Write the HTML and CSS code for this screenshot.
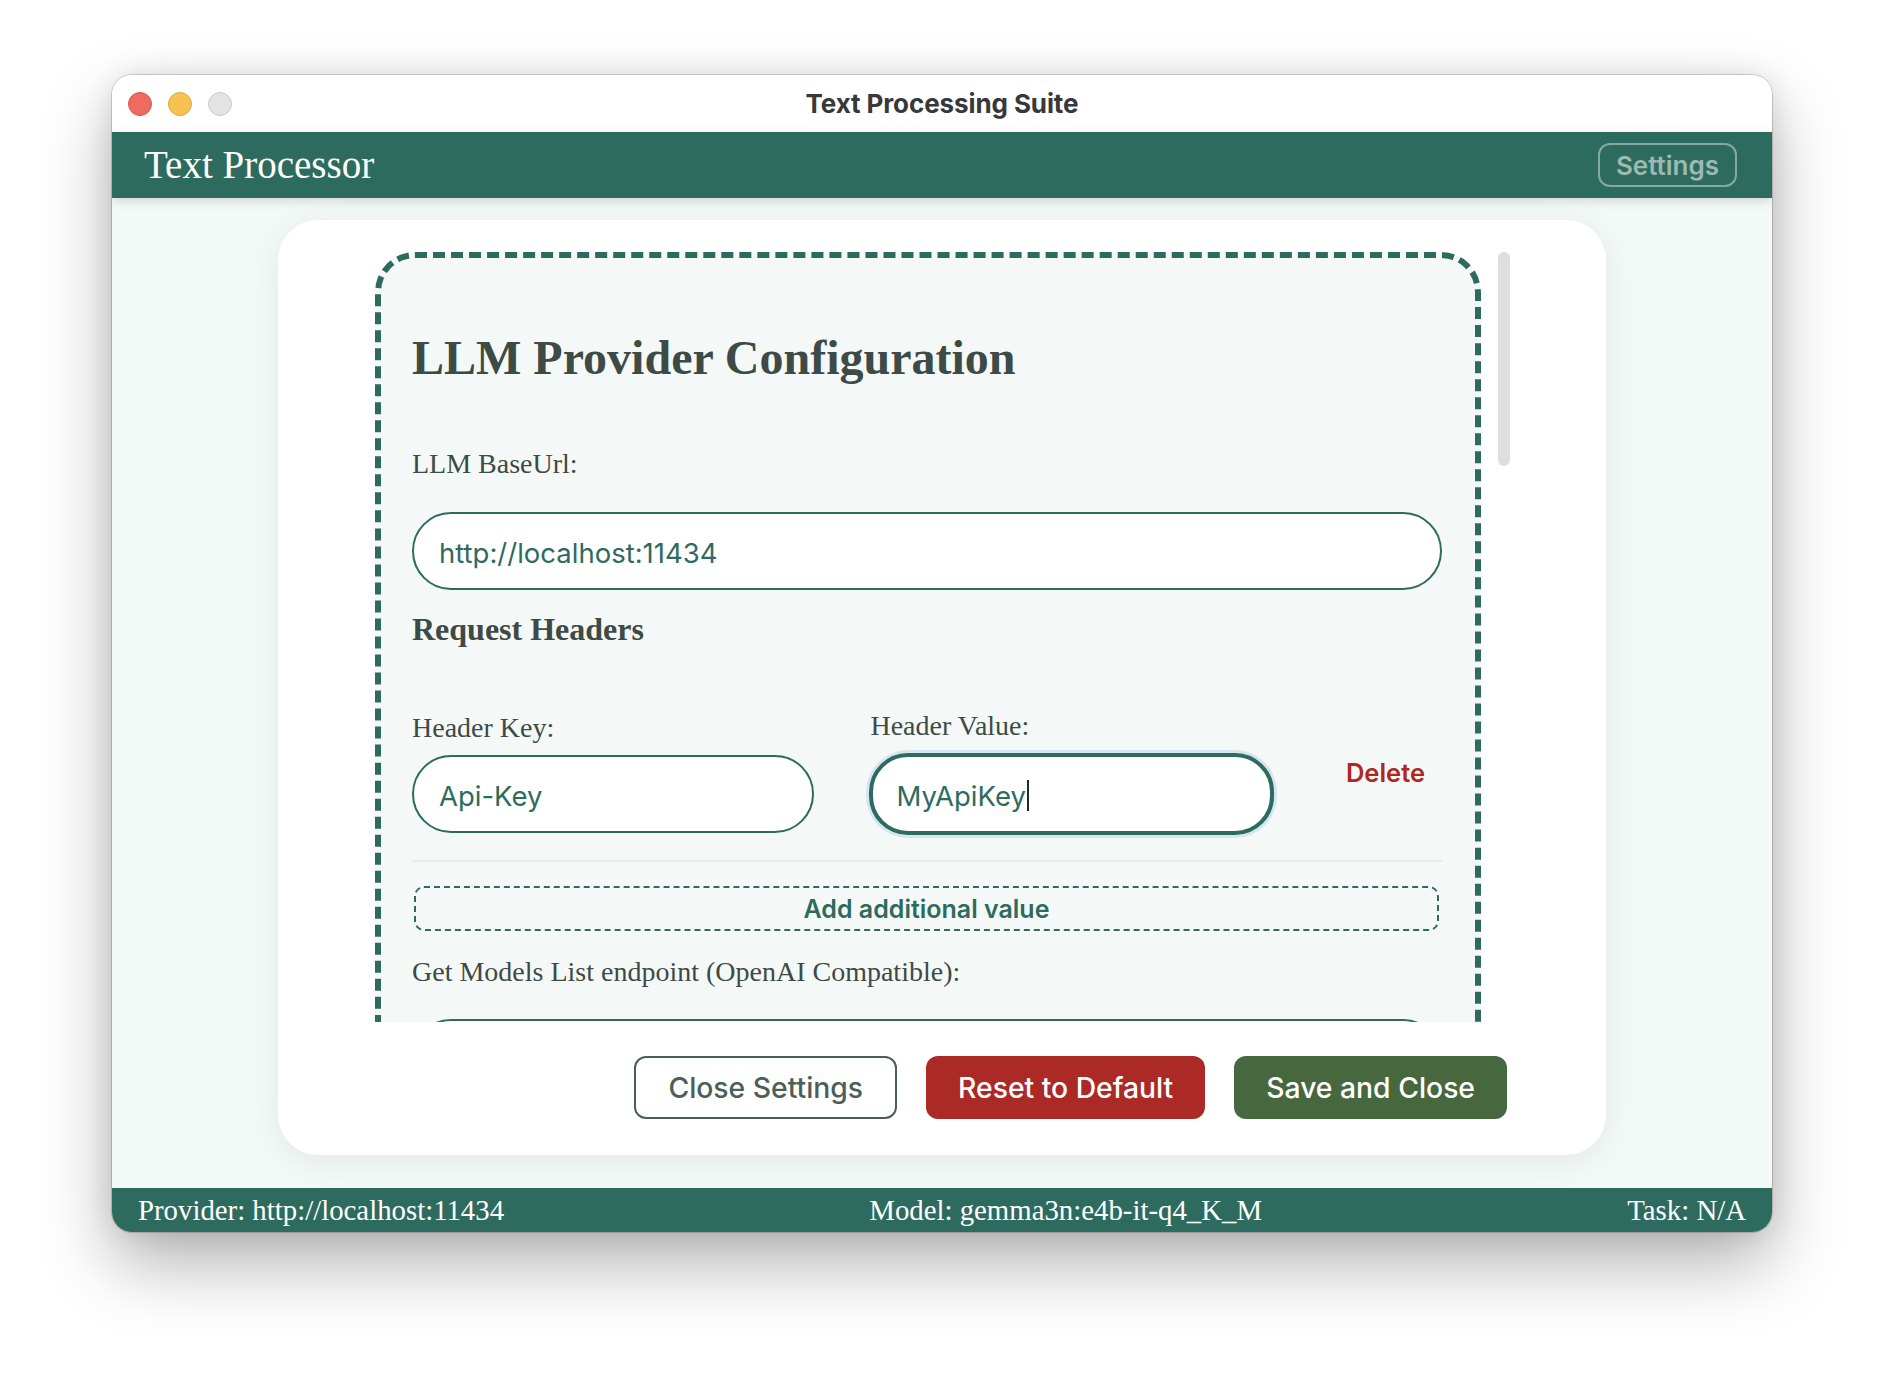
FILE: index.html
```html
<!DOCTYPE html>
<html lang="en">
<head>
<meta charset="utf-8">
<title>Text Processing Suite</title>
<link rel="stylesheet" href="styles.css">
</head>
<body>
<div class="window">
  <div class="titlebar">
    <div class="lights">
      <span class="light red"></span>
      <span class="light yellow"></span>
      <span class="light gray"></span>
    </div>
    <div class="title">Text Processing Suite</div>
    <div class="spacer"></div>
  </div>
  <header class="appbar">
    <div class="brand">Text Processor</div>
    <button class="settings-btn">Settings</button>
  </header>
  <main class="main">
    <section class="card">
      <div class="scroll">
        <div class="scroll-content">
          <div class="config">
            <h2 class="heading">LLM Provider Configuration</h2>
            <div class="label label-base">LLM BaseUrl:</div>
            <div class="field field-base">http://localhost:11434</div>
            <h3 class="subheading">Request Headers</h3>
            <div class="header-row">
              <div class="col">
                <div class="label">Header Key:</div>
                <div class="field">Api-Key</div>
              </div>
              <div class="col">
                <div class="label">Header Value:</div>
                <div class="field focused">MyApiKey<span class="caret"></span></div>
              </div>
              <button class="delete">Delete</button>
            </div>
            <button class="add">Add additional value</button>
            <div class="label label-models">Get Models List endpoint (OpenAI Compatible):</div>
            <div class="field field-models"></div>
          </div>
        </div>
        <div class="scrollbar"><div class="thumb"></div></div>
      </div>
      <div class="actions">
        <button class="btn btn-outline">Close Settings</button>
        <button class="btn btn-red">Reset to Default</button>
        <button class="btn btn-green">Save and Close</button>
      </div>
    </section>
  </main>
  <footer class="status">
    <span>Provider: http://localhost:11434</span>
    <span>Model: gemma3n:e4b-it-q4_K_M</span>
    <span>Task: N/A</span>
  </footer>
</div>
</body>
</html>
```
FILE: styles.css
```css
* { box-sizing: border-box; }

html, body {
  margin: 0;
  background: #ffffff;
}

body {
  min-height: 1380px;
  padding: 75px 0 0 112px;
  font-family: "Liberation Serif", "Times New Roman", serif;
}

.window {
  width: 1660px;
  height: 1157px;
  border-radius: 20px;
  overflow: hidden;
  display: flex;
  flex-direction: column;
  background: #f3f9f7;
  box-shadow: 0 0 0 1px rgba(0,0,0,0.16), 0 32px 70px rgba(0,0,0,0.30), 0 0 28px rgba(0,0,0,0.10);
}

/* title bar */
.titlebar {
  height: 57px;
  flex: 0 0 57px;
  background: #ffffff;
  display: grid;
  grid-template-columns: 1fr auto 1fr;
  align-items: center;
}
.lights {
  display: flex;
  gap: 16px;
  padding-left: 16px;
  padding-top: 1px;
}
.light {
  width: 24px;
  height: 24px;
  border-radius: 50%;
  display: block;
}
.red { background: #ee6b60; border: 1px solid #d7564b; }
.yellow { background: #f6c251; border: 1px solid #dba640; }
.gray { background: #e3e3e3; border: 1px solid #cbcbcb; }
.title {
  font-family: Inter, "Liberation Sans", sans-serif;
  font-weight: 700;
  font-size: 26px;
  color: #383838;
  letter-spacing: -0.1px;
}

/* app bar */
.appbar {
  position: relative;
  z-index: 1;
  height: 66px;
  flex: 0 0 66px;
  background: #2e6b5f;
  display: flex;
  align-items: center;
  justify-content: space-between;
  padding: 0 35px 0 32px;
  box-shadow: 0 3px 10px rgba(0,0,0,0.14);
}
.brand {
  color: #ffffff;
  font-size: 39px;
  line-height: 44px;
}
.settings-btn {
  height: 44px;
  padding: 0 16px;
  border: 2px solid rgba(255,255,255,0.42);
  border-radius: 12px;
  background: transparent;
  color: #9cbab2;
  font-family: Inter, "Liberation Sans", sans-serif;
  font-weight: 600;
  font-size: 26px;
}

/* main area */
.main {
  flex: 1;
  display: flex;
  justify-content: center;
  padding-top: 22px;
}
.card {
  width: 1328px;
  height: 935px;
  background: #ffffff;
  border-radius: 40px;
  padding: 32px 96px 36px 97px;
  box-shadow: 0 6px 34px rgba(0,0,0,0.07);
}

.scroll {
  display: flex;
  gap: 17px;
  height: 770px;
}
.scroll-content {
  width: 1106px;
  height: 770px;
  overflow: hidden;
}
.scrollbar {
  width: 12px;
}
.thumb {
  height: 214px;
  border-radius: 6px;
  background: #dedede;
}

.config {
  border: 6px dashed #2e6b5f;
  border-radius: 40px;
  background: #f4f9f7;
  padding: 72px 33px 60px 31px;
  display: flex;
  flex-direction: column;
  color: #3e4a46;
}

.heading {
  margin: 0;
  font-size: 48px;
  line-height: 56px;
  font-weight: 700;
  color: #3e4a46;
}
.label {
  font-size: 28px;
  line-height: 32px;
  color: #3e4a46;
}
.label-base { margin-top: 62px; }
.label-models { margin-top: 25px; }

.field {
  height: 78px;
  border: 2px solid #2e6b5f;
  border-radius: 39px;
  background: #ffffff;
  display: flex;
  align-items: center;
  padding: 3px 0 0 25px;
  font-family: Inter, "Liberation Sans", sans-serif;
  font-size: 27.5px;
  color: #2e6b5f;
}
.field-base { margin-top: 32px; }
.field-models { margin-top: 31px; }

.subheading {
  margin: 21px 0 0;
  font-size: 32px;
  line-height: 36px;
  font-weight: 700;
  color: #3e4a46;
}

.header-row {
  margin-top: 63px;
  display: flex;
  align-items: center;
  gap: 56px;
  padding-bottom: 25px;
  border-bottom: 2px solid #e6ecea;
}
.col {
  flex: 1;
  display: flex;
  flex-direction: column;
  gap: 11px;
}
.field.focused {
  height: 82px;
  border-width: 4px;
  padding-left: 23px;
  margin: 0 -1px;
  box-shadow: 0 0 0 3px #d5e5f1;
}
.caret {
  display: inline-block;
  width: 2px;
  height: 31px;
  background: #1f2a26;
  margin-left: 1px;
}
.delete {
  border: 0;
  background: transparent;
  padding: 0 17px;
  font-family: Inter, "Liberation Sans", sans-serif;
  font-weight: 600;
  font-size: 25.5px;
  color: #b0271f;
}

.add {
  margin: 24px 3px 0 2px;
  height: 45px;
  border: 2px dashed #2e6b5f;
  border-radius: 10px;
  background: transparent;
  font-family: Inter, "Liberation Sans", sans-serif;
  font-weight: 600;
  font-size: 25px;
  color: #2e6b5f;
}

/* actions */
.actions {
  margin-top: 34px;
  display: flex;
  justify-content: flex-end;
  gap: 29px;
  padding-right: 3px;
}
.btn {
  height: 63px;
  padding: 0 32px;
  border-radius: 12px;
  border: 0;
  font-family: Inter, "Liberation Sans", sans-serif;
  font-weight: 500;
  font-size: 28.3px;
  color: #ffffff;
}
.btn-outline {
  background: #ffffff;
  border: 2px solid #4b5e58;
  color: #4b5e58;
}
.btn-red { background: #ac2a26; }
.btn-green { background: #47673f; }

/* status bar */
.status {
  height: 44px;
  flex: 0 0 44px;
  background: #2e6b5f;
  display: flex;
  align-items: center;
  justify-content: space-between;
  padding: 0 26px;
  color: #ffffff;
  font-size: 28.8px;
}
```
